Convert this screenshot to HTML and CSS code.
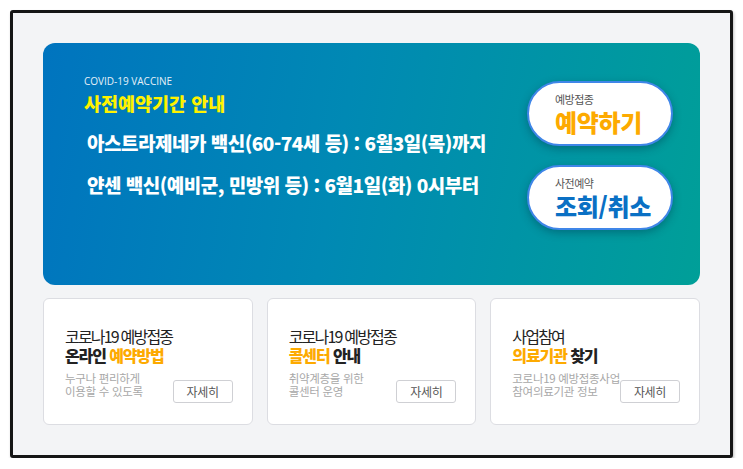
FILE: index.html
```html
<!DOCTYPE html>
<html lang="ko">
<head>
<meta charset="utf-8">
<title>COVID-19 백신 사전예약</title>
<link rel="stylesheet" href="styles.css">
</head>
<body>
<div class="frame">
  <section class="banner">
    <div class="banner-text">
      <p class="eyebrow">COVID-19 VACCINE</p>
      <h1 class="banner-title">사전예약기간 안내</h1>
      <p class="banner-line first">아스트라제네카 백신(60-74세 등) : 6월3일(목)까지</p>
      <p class="banner-line">얀센 백신(예비군, 민방위 등) : 6월1일(화) 0시부터</p>
    </div>
    <div class="banner-actions">
      <a class="pill" href="#">
        <span class="pill-sub">예방접종</span>
        <span class="pill-main orange">예약하기</span>
      </a>
      <a class="pill" href="#">
        <span class="pill-sub">사전예약</span>
        <span class="pill-main blue">조회/취소</span>
      </a>
    </div>
  </section>
  <section class="cards">
    <div class="card">
      <h2 class="card-title"><span class="t1">코로나19 예방접종</span><span class="t2">온라인 <em>예약방법</em></span></h2>
      <div class="card-bottom">
        <p class="card-desc">누구나 편리하게<br>이용할 수 있도록</p>
        <a class="more" href="#">자세히</a>
      </div>
    </div>
    <div class="card">
      <h2 class="card-title"><span class="t1">코로나19 예방접종</span><span class="t2"><em>콜센터</em> 안내</span></h2>
      <div class="card-bottom">
        <p class="card-desc">취약계층을 위한<br>콜센터 운영</p>
        <a class="more" href="#">자세히</a>
      </div>
    </div>
    <div class="card">
      <h2 class="card-title"><span class="t1">사업참여</span><span class="t2"><em>의료기관</em> 찾기</span></h2>
      <div class="card-bottom">
        <p class="card-desc">코로나19 예방접종사업<br>참여의료기관 정보</p>
        <a class="more" href="#">자세히</a>
      </div>
    </div>
  </section>
</div>
</body>
</html>
```

FILE: styles.css
```css
* { box-sizing: border-box; margin: 0; padding: 0; }
html, body { background: #ffffff; }
body {
  font-family: "Noto Sans CJK KR", "Noto Sans", sans-serif;
  padding: 10px 0 0 10px;
}
.frame {
  width: 723px;
  height: 448px;
  border: 3px solid #151515;
  border-radius: 3px;
  background: #f3f4f6;
  padding: 30px;
  box-shadow: 1px 2px 3px rgba(0,0,0,0.25);
}
.banner {
  height: 242px;
  border-radius: 12px;
  background: linear-gradient(100deg, #0074bf 0%, #0089b4 45%, #009f98 100%);
  display: flex;
  justify-content: space-between;
  padding: 0 27px 0 41px;
}
.banner-text { padding-top: 31px; color: #fff; }
.eyebrow {
  font-family: "Open Sans", "Noto Sans", sans-serif;
  font-size: 10px;
  line-height: 14px;
  color: #e6f0f8;
}
.banner-title {
  margin-top: 4px;
  font-size: 18.5px;
  line-height: 23px;
  font-weight: 900;
  color: #fff200;
  letter-spacing: 0;
}
.banner-line {
  margin-top: 17px;
  padding-left: 3px;
  font-size: 19px;
  line-height: 25px;
  font-weight: 900;
  letter-spacing: -0.5px;
  color: #fff;
}
.banner-line.first { margin-top: 15px; }
.banner-actions {
  padding-top: 38px;
  display: flex;
  flex-direction: column;
  gap: 19px;
}
.pill {
  width: 146px;
  height: 65px;
  border-radius: 33px;
  background: #fff;
  border: 2px solid #3f86e8;
  box-shadow: 0 3px 9px rgba(0, 40, 60, 0.35);
  display: flex;
  flex-direction: column;
  justify-content: center;
  padding-left: 26px;
  text-decoration: none;
}
.pill-sub {
  font-size: 11px;
  line-height: 15px;
  color: #555;
  letter-spacing: -0.5px;
}
.pill-main {
  font-size: 24px;
  line-height: 29px;
  font-weight: 900;
  letter-spacing: -0.3px;
}
.orange { color: #fdaa00; }
.blue { color: #0a70c4; }

.cards {
  margin-top: 13px;
  display: grid;
  grid-template-columns: repeat(3, 1fr);
  gap: 14px;
  height: 127px;
}
.card {
  background: #fff;
  border: 1px solid #dcdde2;
  border-radius: 6px;
  padding: 28px 19px 0 21px;
}
.card-title {
  font-size: 16px;
  line-height: 19px;
  color: #222;
}
.card-title span { display: block; }
.card-title .t1 { font-weight: 400; letter-spacing: -1.8px; }
.card-title .t2 { font-weight: 800; letter-spacing: -1.1px; }
.card-title em { font-style: normal; color: #fdaa00; }
.card-bottom {
  margin-top: 7px;
  display: flex;
  justify-content: space-between;
  align-items: flex-start;
}
.card-desc {
  font-size: 11.5px;
  line-height: 13px;
  color: #a8a8a8;
  letter-spacing: -0.3px;
}
.more {
  margin-top: 8px;
  width: 60px;
  height: 23px;
  border: 1px solid #cfd0d4;
  border-radius: 3px;
  font-size: 12px;
  line-height: 21px;
  text-align: center;
  color: #555;
  text-decoration: none;
  letter-spacing: -0.3px;
}
```
